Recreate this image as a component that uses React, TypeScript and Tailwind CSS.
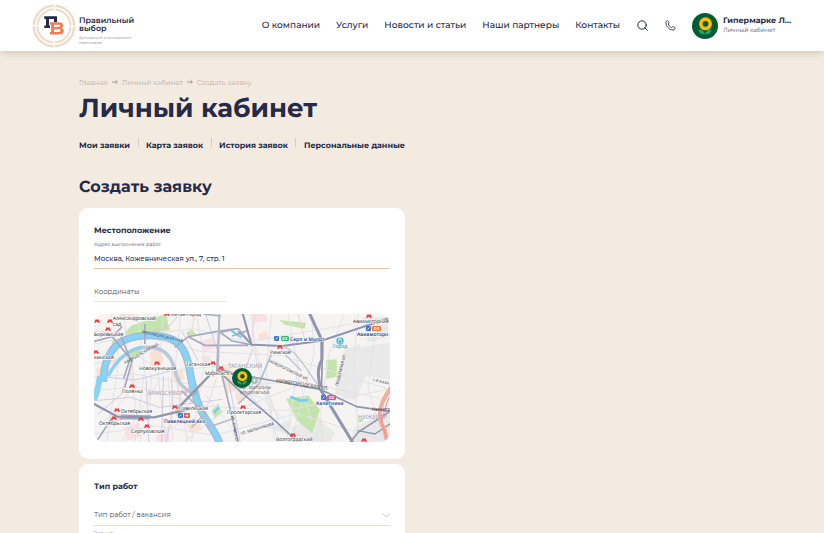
import React from "react";

const navItems = ["О компании", "Услуги", "Новости и статьи", "Наши партнеры", "Контакты"];
const tabs = ["Мои заявки", "Карта заявок", "История заявок", "Персональные данные"];
const crumbs = ["Главная", "Личный кабинет", "Создать заявку"];

function Sunflower({ className }: { className: string }) {
  return (
    <svg viewBox="0 0 26 26" className={className} aria-hidden="true">
      <SunflowerShapes />
    </svg>
  );
}

function SunflowerShapes() {
  return (
    <>
      <circle cx="13" cy="13" r="13" fill="#005c35" />
      <path d="M6.500 16.500c3 0 5.500 1.300 6.500 4.800-4 0-6-1.300-6.500-4.800ZM19.500 16.500c-3 0-5.500 1.300-6.500 4.800 4 0 6-1.300 6.500-4.800Z" fill="#27a567" />
      <circle cx="13.500" cy="10.800" r="4.700" fill="none" stroke="#ffba0a" strokeWidth="3.600" />
    </>
  );
}

function LogoMark() {
  return (
    <svg viewBox="0 0 44 44" className="size-11 shrink-0" aria-hidden="true">
      <g fill="none" stroke="#ecdcc8">
        <circle cx="22" cy="22" r="20.200" strokeWidth="2.500" strokeDasharray="30.230 1.500" strokeDashoffset="-.75" />
        <circle cx="22" cy="22" r="16.500" strokeWidth="2" strokeDasharray="24.420 1.500" strokeDashoffset="-.75" />
      </g>
      <path d="M12.300 12.300H25V18h-3v-3h-5v6.500h1V24h-5.700v-2.500h1.700V15h-1.700Z" fill="#242a47" />
      <path
        fillRule="evenodd"
        d="M18 18.200h8.500c3 0 4.700 1 4.700 3.200 0 1.300-.6 2-1.600 2.500 1.400.5 2.200 1.400 2.200 3 0 2.400-1.800 3.500-5 3.500H18v-2.500h1.200v-7.200H18Zm4 2.500v2.200h4c1.500 0 2.200-.3 2.200-1.100s-.7-1.100-2.200-1.100Zm0 4.500v2.700h4.500c1.500 0 2.200-.4 2.200-1.300s-.7-1.400-2.200-1.400Z"
        fill="#ee7c58"
      />
    </svg>
  );
}

/* Metro marks: icon x, icon y, station name, label x, label y */
const stations: [number, number, string, number, number][] = [
  [3, 8, "", 0, 0],
  [16, 8, "Александровский", 19, 6],
  [14, 16, "Боровицкая", 0, 22],
  [73, 1, "Китай-город", 77, 2],
  [2, 39, "кинская", 0, 45],
  [63, 50, "Новокузнецкая", 45, 56],
  [119, 50, "Таганская", 92, 52],
  [127, 55, "Марксистская", 111, 61],
  [186, 34, "Римская", 176, 40],
  [275, 3, "Авиамоторная", 259, 9],
  [38, 73, "Полянка", 28, 79],
  [23, 97, "Октябрьская", 27, 99],
  [20, 105, "Октябрьская", 5, 111],
  [47, 106, "", 0, 0],
  [53, 113, "Серпуховская", 37, 119],
  [81, 94, "Павелецкая", 85, 96],
  [149, 94, "Пролетарская", 133, 100],
  [199, 122, "Волгоградский", 182, 127],
  [270, 127, "", 0, 0],
];

function CityMap() {
  return (
    <svg
      viewBox="0 0 296 128"
      preserveAspectRatio="xMidYMid slice"
      className="h-32 w-full rounded-[10px]"
      fontFamily="'Noto Sans', sans-serif"
      role="img"
      aria-label="Карта"
    >
      <rect width="296" height="128" fill="#f5f4f3" />
      <g transform="translate(-2.500 -3.300) scale(.3333)">
        <g fill="#e9e9ea">
          <path d="M758 118l47-18 18 95-30 75-65-20ZM800 110l95-14v112l-82-14ZM600 350l70-35 60 50-18 40H590ZM790 350l105-52v100H775ZM520 350l80-20-10 40ZM810 20l80 0v60l-60 15Z" />
        </g>
        <g fill="#f7e3d6">
          <path d="M175 120l30-8 12 35-16 35-22-15ZM238 185l34-8 8 28-32 12ZM385 165l30 5 20 70-28 10ZM82 10h46l6 14-48 8ZM285 330l35-8 12 34-38 10ZM12 175l28-12 12 38-30 12ZM430 250l20-10 10 30-22 6ZM500 70l24-10 10 24-28 8ZM45 140l26-10 6 26-24 8Z" />
        </g>
        <g fill="#f8e0e6">
          <path d="M98 350l44-14 10 40-46 14ZM325 92l40-12 14 28-38 16ZM195 365l34-12 8 42h-42ZM52 312l34-8 4 26-36 8ZM330 140l26-6 4 22-26 6ZM480 10l44 0 4 22-44 4Z" />
        </g>
        <g fill="#c3e5ab">
          <path d="M118 45l105-35 12 48-72 12-45 10-20-10ZM104 136l38-26 8 12-38 26ZM584 264l66-10 36 44-24 70-46-40ZM704 148l32-2v52l-32 6ZM360 300l20-22 12 28-22 18ZM284 66l18-10 12 16-24 8ZM564 28l80 8-4 18-60-12ZM250 296l20-8 14 22-28 8ZM60 90l24-8-4 22-16 10ZM800 326l12-4 4 10-14 4ZM284 160l10 0 0 12h-10ZM176 28l30-12 12 26-24 12Z" />
        </g>
        <g fill="none" stroke="#e2e2e7" strokeWidth="3">
          <path d="M8 100l130-28 190 50 240 12 320 100M8 160l130-24 74 46 216-20M8 200l120-10 220 40 280-18 260 56M8 240l130-12 200 58 240 14 310-64M8 370l190-24 170 28 250-66 270 86M8 60l130 14 168-20 160 40 290-50 136-24" />
          <path d="M60 10l22 138-36 246M98 10l10 120 40 264M136 10l24 166-30 218M216 10l-16 188 24 196M268 10l-16 150 36 234M314 10l26 140-40 244M480 10l14 140 66 244M540 10l-16 170 26 214M590 10l30 160-36 224M660 10l8 120-70 264M800 10l-14 150 16 234M852 50l-22 180 46 164M180 190l-10 204M230 200l14 190" />
          <path d="M408 50l84 76 80 240 124 20M430 240l80 20 136 134M340 250l80 102M758 10l-46 124-46 320M24 350l120-140M90 394l116-190M250 350l130-200M280 394l126-102M430 300l200-80M500 200l60 120M620 200l40 130" />
        </g>
        <g fill="none" stroke="#cfcbe3" strokeWidth="3">
          <path d="M8 270l110-10 86 30 188-24M50 200l80 8 104-26M216 196l-6 198M164 200l8 194M240 200l4 100-20 94M144 70l90-24 30-36M530 310l-86-86 40-110M342 10l42 128M410 200l36 194M20 310l70-60 26-80M270 60l50 90" />
        </g>
        <g fill="none" stroke="#f3d3d6" strokeWidth="3">
          <path d="M310 10l-14 70M376 200l-30 90M490 10l-10 84 26 40M686 320l8 76M256 210l16 120M120 150l10 90M620 10l20 80" />
        </g>
        <path d="M36 214C36 170 48 112 100 88c44-18 110-18 146 0 26 14 38 40 46 76 8 50 14 80 34 130 14 34 42 60 58 102" fill="none" stroke="#a8b4ca" strokeWidth="23" />
        <path d="M36 214C36 170 48 112 100 88c44-18 110-18 146 0 26 14 38 40 46 76 8 50 14 80 34 130 14 34 42 60 58 102" fill="none" stroke="#87d2f6" strokeWidth="17" />
        <path d="M26 196c-4 20-8 50-18 70" fill="none" stroke="#87d2f6" strokeWidth="18" />
        <path d="M50 196c20-40 60-86 110-86 50-4 76 20 88 60 10 42 20 60 54 74" fill="none" stroke="#bcc9da" strokeWidth="11" />
        <path d="M50 196c20-40 60-84 104-86" fill="none" stroke="#87d2f6" strokeWidth="8" />
        <path d="M596 258l30 12 24-2M368 306l14-16M420 60l30 20" fill="none" stroke="#74cdf5" strokeWidth="7" />
        <g fill="none" stroke="#a4abbe" strokeWidth="5">
          <path d="M8 92l54-14 60 72-22 80M62 78l30-30M160 40v60M84 66l32 78-20 60M88 314l90 2M84 324l90 0M60 324l-46 70M336 10l52 6" />
          <path d="M250 110l40-32 88-16 60-8M384 10l-8 170M380 60l40 30 60 12M290 78l50 26h130M380 66l60-12 40 46M380 178l-16 20M388 180l52 214M468 60l-46 16" />
          <path d="M384 10l-4 160M270 240l70 70 10 40 74-26M340 310l-40 40M540 130l-38 90-62 60" stroke="#b6bccb" />
        </g>
        <g fill="none" stroke="#9097ac" strokeLinecap="round">
          <path d="M8 280l70 38 110 2 136-32M262 290l102-106" strokeWidth="7" />
          <path d="M454 10l26 92 92 4 118-16 205-68" strokeWidth="6" />
          <path d="M655 10l36 78v60c-18 30-8 60-4 88l96 158" strokeWidth="9" />
          <path d="M694 90l-4 140" strokeWidth="5" />
          <path d="M380 180l70 66 92 76 60 56 20 16M388 178l90 20 208 38 110 52 98 14M895 302l-94 62-24 30" strokeWidth="5" />
          <path d="M454 10l26 92-40-40M800 360l50 10 45-30" strokeWidth="4" />
        </g>
        <path d="M572 106c50 12 80 90 118 128M570 120l60 60" fill="none" stroke="#c0c4ce" strokeWidth="4" />
        <path d="M900 230c-40 50-44 90-20 130l8 40" fill="none" stroke="#f6ad9f" strokeWidth="13" />
        <path d="M892 260l-22 70 14 50" fill="none" stroke="#ee8877" strokeWidth="3" />
        <circle cx="489" cy="210" r="10" fill="#aeb1b8" />
        <path d="M489 203v14M483 209h12" stroke="#fff" strokeWidth="2" />
      </g>

      <g fontSize="6" fill="#a3a2ba">
        <text x="134" y="54">ТАГАНСКИЙ</text>
        <text x="53" y="81">ЗАМОСКВОРЕЧЬЕ</text>
        <text x="264" y="105">НИЖЕГОР</text>
      </g>
      <g fontSize="4" fill="#45464c">
        <text x="48" y="19" transform="rotate(13 48 19)">МОСКВОРЕЦКАЯ НАБ.</text>
        <text x="31" y="50" transform="rotate(-29 31 50)">КАДАШЕВСКАЯ НАБ.</text>
        <text x="182" y="68" fontSize="5" transform="rotate(9 182 68)">НИЖЕГОРОДСКАЯ УЛ.</text>
        <text x="175" y="48" transform="rotate(26 175 48)">НОВОРОГОЖСКАЯ УЛ.</text>
        <text x="244" y="72" transform="rotate(-76 244 72)">ПОДЪЕМНАЯ УЛ.</text>
        <text x="147" y="121" transform="rotate(-17 147 121)">УЛ. МЕЛЬНИКОВА</text>
        <text x="137" y="102" transform="rotate(80 137 102)">УЛ. СИМОНО</text>
        <text x="278" y="67" transform="rotate(13 278 67)">1-Я КАЗА</text>
      </g>
      <g fontSize="5" fill="#2c2d33">
        {stations.map(([x, y, label, tx, ty], index) => (
          <g key={index}>
            <path d={`M${x - 2} ${y + 1}v-1l1-2 1 1.500 1-1.500 1 2v1`} fill="none" stroke="#ed3237" strokeWidth="1.300" />
            {label && <text x={tx} y={ty} stroke="#fff" strokeWidth="1.200" paintOrder="stroke">{label}</text>}
          </g>
        ))}
        <text x="19" y="12">сад</text>
        <g fill="#6e7078"><text x="145" y="75">им. Матроны</text><text x="146" y="80">Московской</text></g>
        <text x="278" y="97">Нижего</text>
      </g>
      <g>
        <rect x="180" y="22" width="5" height="5" rx="1" fill="#3978dc" />
        <rect x="187" y="22" width="8" height="5" rx="1.500" fill="#3ab373" />
        <rect x="272" y="12" width="5" height="5" rx="1" fill="#3978dc" />
        <rect x="278" y="12" width="9" height="5" rx="1.500" fill="#f3772e" />
        <rect x="227" y="81" width="5" height="5" rx="1" fill="#3978dc" />
        <rect x="233" y="81" width="9" height="5" rx="1.500" fill="#e84e86" />
        <rect x="84" y="99" width="5" height="5" rx="1" fill="#3978dc" />
        <rect x="90" y="99" width="6" height="5" rx="1" fill="#ed5949" />
        <g fill="#fff" fontSize="4" fontWeight="700"><text x="188" y="26">D2</text><text x="280" y="16">D3</text><text x="235" y="85">D2</text></g>
        <path d="M181.500 25.500l2-2M273.500 15.500l2-2M228.500 84.500l2-2M85.500 102.500l2-2M91.500 101.500h3M93 100v3" stroke="#fff" strokeWidth=".8" />
      </g>
      <g fontSize="5" fontWeight="600" fill="#22468f" stroke="#fff" strokeWidth="1" paintOrder="stroke">
        <text x="196" y="27">Серп и Молот</text><text x="263" y="22">Авиамоторн</text>
        <text x="222" y="91">Калитники</text><text x="70" y="109">Павелецкий вкз.</text>
      </g>
      <circle cx="246" cy="27" r="4" fill="#22acc4" stroke="#fff" strokeWidth=".6" />
      <path d="M244.300 26h3.400l.3 3h-4ZM245 26v-1.500h2V26" fill="none" stroke="#fff" strokeWidth=".7" />
      <text x="239" y="34" fontSize="5" fill="#1687a1">Город</text>
      <g transform="translate(138 54) scale(.77)">
        <SunflowerShapes />
      </g>
    </svg>
  );
}

export default function App() {
  return (
    <div className="h-screen overflow-hidden bg-[#f4ebe0] font-['Montserrat','Inter',sans-serif] text-[#242a47] [text-rendering:geometricPrecision]">
      <header className="relative flex items-center bg-white pr-8 pl-8 shadow-[0_1px_8px_rgba(80,60,30,0.25)]">
        <a href="#" className="flex items-center gap-[3px] pt-1 pb-[3px]">
          <LogoMark />
          <span className="block pt-[10px]">
            <span className="block text-[8px] leading-2 font-semibold">Правильный<br />выбор</span>
            <span className="mt-[3px] block text-[4px] leading-[5px] text-[#85858b]">Аутсорсинг и консалтинг<br />персонала</span>
          </span>
        </a>
        <nav className="ml-auto flex items-center gap-4 pt-px text-[9px] leading-4 font-medium whitespace-nowrap">
          {navItems.map((item) => <a key={item} href="#">{item}</a>)}
        </nav>
        <button type="button" aria-label="Поиск" className="ml-[17px]">
          <svg viewBox="0 0 11 11" className="size-[11px]" fill="none" stroke="currentColor" strokeLinecap="round">
            <circle cx="5" cy="5" r="4.200" /><path d="M8 8l2.300 2.300" />
          </svg>
        </button>
        <button type="button" aria-label="Телефон" className="ml-[17px]">
          <svg viewBox="0 0 11 11" className="size-[11px]" fill="none" stroke="currentColor" strokeWidth=".9" strokeLinejoin="round">
            <path d="M.9 2.700C.9 1.300 1.900.8 2.700.7c.9.5 1.400 1.500 1.300 2.400l-.8.9c.5 1.500 1.700 2.900 3.400 3.500l1-.8c1-.1 2 .4 2.600 1.300-.1 1-.8 2-2.100 2C4.700 10 .9 6.500.9 2.700Z" />
          </svg>
        </button>
        <a href="#" className="ml-4 flex items-center gap-[5px]">
          <Sunflower className="size-[26px]" />
          <span className="w-[69px]">
            <span className="block text-[8px] leading-[10px] font-bold whitespace-nowrap">Гипермарке Л...</span>
            <span className="block text-[6px] leading-[9px] whitespace-nowrap text-[#4a4e63]">Личный кабинет</span>
          </span>
        </a>
      </header>

      <main className="px-[79px] pt-[26px]">
        <nav aria-label="Хлебные крошки" className="flex gap-1 text-[7px] leading-3 text-[#b8aca8]">
          {crumbs.map((crumb, index) => (
            <React.Fragment key={crumb}>
              {index > 0 && (
                <svg viewBox="0 0 6 6" className="mt-[2px] h-[6px] w-[6px]" fill="none" stroke="#8f8686" strokeWidth=".8"><path d="M0 3h5M3.500 1.200 5.400 3 3.500 4.800" /></svg>
              )}
              <a href="#">{crumb}</a>
            </React.Fragment>
          ))}
        </nav>
        <h1 className="mt-[3px] text-[26px] leading-8 font-bold">Личный кабинет</h1>
        <div className="max-w-[326px]">
          <nav className="mt-[14px] flex justify-between text-[8px] leading-4 font-bold whitespace-nowrap">
            {tabs.map((tab, index) => (
              <React.Fragment key={tab}>
                {index > 0 && <span className="h-[9px] w-px bg-[#d5cbc2]" />}
                <a href="#">{tab}</a>
              </React.Fragment>
            ))}
          </nav>
          <h2 className="mt-[22px] text-[16px] leading-6 font-bold">Создать заявку</h2>

          <form className="mt-2 flex flex-col gap-[5px]">
            <section className="rounded-[9px] bg-white px-[15px] pt-[17px] pb-[17px]">
              <h3 className="text-[8px] leading-3 font-bold">Местоположение</h3>
              <label htmlFor="address" className="mt-1 block text-[5px] leading-2 text-[#4a4e63]">Адрес выполнения работ</label>
              <input id="address" defaultValue="Москва, Кожевническая ул., 7, стр. 1" className="block h-5 w-full border-b border-[#e1c7a5] text-[7px] font-medium outline-none" />
              <input aria-label="Координаты" placeholder="Координаты" className="mt-3 mb-3 block h-[21px] w-[132px] border-b border-[#f2e4d5] text-[7px] outline-none placeholder:text-[#4a4e63]" />
              <CityMap />
            </section>
            <section className="rounded-[9px] bg-white px-[15px] pt-[17px] pb-6">
              <h3 className="text-[8px] leading-3 font-bold">Тип работ</h3>
              <div className="mt-3 flex items-center border-b border-[#ecdcc9]">
                <select aria-label="Тип работ / вакансия" className="h-5 w-full appearance-none text-[7px] text-[#4a4e63] outline-none">
                  <option>Тип работ / вакансия</option>
                </select>
                <svg viewBox="0 0 8 5" className="h-[5px] w-2" fill="none" stroke="#b9bac2" strokeWidth=".8"><path d="m.5.5 3.500 3.500L7.500.5" /></svg>
              </div>
              <label htmlFor="grade" className="mt-1 block text-[5px] leading-2 text-[#4a4e63]">Звание</label>
              <input id="grade" className="block h-5 w-full border-b border-[#ecdcc9] outline-none" />
            </section>
          </form>
        </div>
      </main>
    </div>
  );
}
